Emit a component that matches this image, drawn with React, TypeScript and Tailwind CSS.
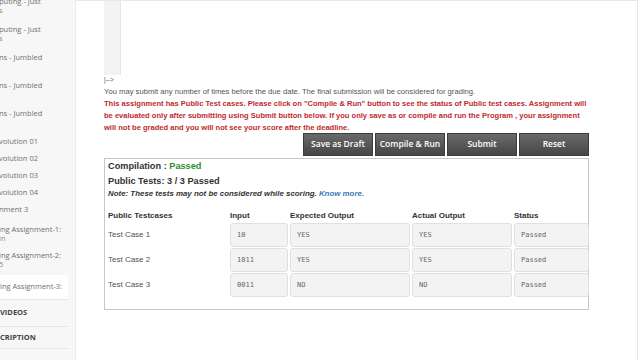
const sideFont = { fontFamily: '"Open Sans", "Liberation Sans", sans-serif' };

type Item = { lines: string[]; h: string };

const items: Item[] = [
  { lines: ["puting - Just", "s"], h: "h-[28px]" },
  { lines: ["puting - Just", "s"], h: "h-[28px]" },
  { lines: ["ns - Jumbled"], h: "h-[28px]" },
  { lines: ["ns - Jumbled"], h: "h-[28px]" },
  { lines: ["ns - Jumbled"], h: "h-[28px]" },
  { lines: ["volution 01"], h: "h-[17px]" },
  { lines: ["volution 02"], h: "h-[17px]" },
  { lines: ["volution 03"], h: "h-[17px]" },
  { lines: ["volution 04"], h: "h-[17px]" },
  { lines: ["nment 3"], h: "h-[20px]" },
  { lines: ["ing Assignment-1:", "in"], h: "h-[26px]" },
  { lines: ["ing Assignment-2:", "5"], h: "h-[24px]" },
];

const rows = [
  { name: "Test Case 1", input: "10", expected: "YES", actual: "YES" },
  { name: "Test Case 2", input: "1011", expected: "YES", actual: "YES" },
  { name: "Test Case 3", input: "0011", expected: "NO", actual: "NO" },
];

function Sidebar() {
  return (
    <aside
      className="w-[76px] shrink-0 bg-[#f7f7f7] border-r border-[#ececec] overflow-hidden text-[7.5px] text-[#707070]"
      style={sideFont}
    >
      <div className="w-[68px] -mt-[3px]">
        {items.map((it, i) => (
          <div key={i} className={`${it.h} leading-[9px] whitespace-nowrap -ml-[1px]`}>
            {it.lines.map((l, j) => (
              <div key={j} className={j > 0 ? "text-[#a58457]" : ""}>
                {l}
              </div>
            ))}
          </div>
        ))}
        <div className="h-[25px] bg-white pt-[7px] leading-[9px] whitespace-nowrap -ml-[1px] pl-[1px] border-b border-[#e6e6e6]">
          ing Assignment-3:
        </div>
        <div className="h-[27px] flex items-center font-bold text-[#444] border-b border-[#e6e6e6] text-[7.5px]">
          VIDEOS
        </div>
        <div className="h-[22px] flex items-center font-bold text-[#444] border-b border-[#e6e6e6] text-[7.5px]">
          CRIPTION
        </div>
      </div>
    </aside>
  );
}

function Buttons() {
  const labels = ["Save as Draft", "Compile & Run", "Submit", "Reset"];
  return (
    <div className="flex justify-end gap-[2px]" style={sideFont}>
      {labels.map((l) => (
        <button
          key={l}
          className="h-[23px] w-[70px] bg-gradient-to-b from-[#6a6a6a] to-[#464646] border border-[#3c3c3c] text-white text-[8.5px] font-semibold"
        >
          {l}
        </button>
      ))}
    </div>
  );
}

function Cell({ children }: { children: React.ReactNode }) {
  return (
    <div
      className="h-[24px] flex items-center pl-[6px] bg-[#f3f3f3] border border-[#e0e0e0] rounded-[3px] text-[7px] text-[#666]"
      style={{ fontFamily: '"DejaVu Sans Mono", "Liberation Mono", monospace' }}
    >
      {children}
    </div>
  );
}

function Results() {
  return (
    <div className="mt-[2px] h-[152px] border border-[#c8c8c8] pl-[3px] text-[#333]">
      <div className="leading-[14px] text-[9.2px] font-bold">
        Compilation : <span className="text-[#2f8f2f]">Passed</span>
      </div>
      <div className="mt-[1px] leading-[14px] text-[9.2px] font-bold">Public Tests: 3 / 3 Passed</div>
      <div className="leading-[12px] text-[7.9px] font-bold italic text-[#333]">
        Note: These tests may not be considered while scoring.{" "}
        <span className="text-[#3a78b8]">Know more.</span>
      </div>
      <div className="mt-[9px] grid grid-cols-[120px_58px_120px_100px_75px] gap-x-[2px] gap-y-[1px]">
        {["Public Testcases", "Input", "Expected Output", "Actual Output", "Status"].map((h) => (
          <div key={h} className="h-[13px] leading-[13px] text-[8px] font-bold text-[#333]">
            {h}
          </div>
        ))}
        {rows.map((r) => (
          <>
            <div key={r.name + "n"} className="h-[24px] flex items-center text-[8px] text-[#4a5656]">
              {r.name}
            </div>
            <Cell key={r.name + "i"}>{r.input}</Cell>
            <Cell key={r.name + "e"}>{r.expected}</Cell>
            <Cell key={r.name + "a"}>{r.actual}</Cell>
            <Cell key={r.name + "s"}>Passed</Cell>
          </>
        ))}
      </div>
    </div>
  );
}

export default function App() {
  return (
    <div
      className="w-[640px] h-[360px] flex overflow-hidden bg-white"
      style={{ fontFamily: '"Liberation Sans", Arial, sans-serif' }}
    >
      <Sidebar />
      <main className="flex-1 border-t border-r border-[#e8e8e8] mr-[2px] pl-[28px]">
        <div className="w-[485px]">
          <div className="w-[17px] h-[74px] bg-[#f3f3f3] border-r border-[#e6e6e6]" />
          <div className="leading-[10px] text-[6.5px] text-[#555]">|--&gt;</div>
          <div className="mt-[1px] leading-[12px] text-[7.65px] text-[#555]">
            You may submit any number of times before the due date. The final submission will be considered for grading.
          </div>
          <div className="w-[495px] leading-[12px] text-[7.55px] font-bold text-[#c0282f] whitespace-nowrap">
            This assignment has Public Test cases. Please click on "Compile &amp; Run" button to see the status of Public
            test cases. Assignment will
            <br />
            be evaluated only after submitting using Submit button below. If you only save as or compile and run the
            Program , your assignment
            <br />
            will not be graded and you will not see your score after the deadline.
          </div>
          <div className="-mt-[1px]">
            <Buttons />
          </div>
          <Results />
        </div>
      </main>
    </div>
  );
}
